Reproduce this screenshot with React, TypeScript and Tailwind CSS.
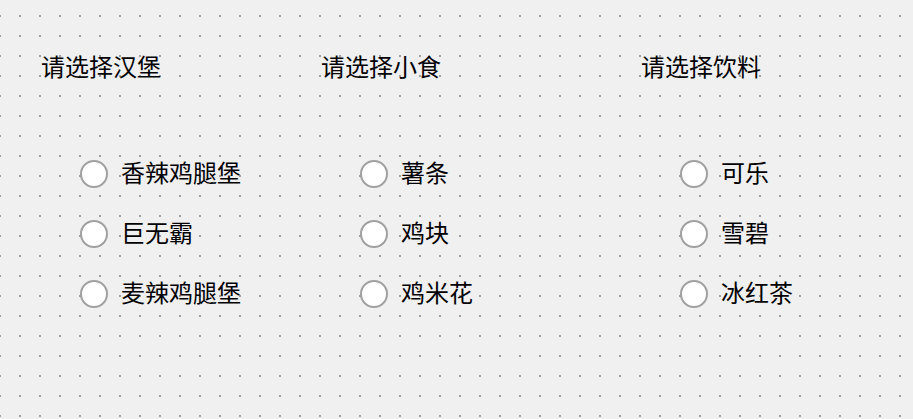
import { useState } from "react";

const groups = [
  { title: "请选择汉堡", items: ["香辣鸡腿堡", "巨无霸", "麦辣鸡腿堡"], width: "w-[280px]" },
  { title: "请选择小食", items: ["薯条", "鸡块", "鸡米花"], width: "w-[320px]" },
  { title: "请选择饮料", items: ["可乐", "雪碧", "冰红茶"], width: "w-[240px]" },
];

const RadioRow = ({
  label,
  checked,
  onSelect,
}: {
  label: string;
  checked: boolean;
  onSelect: () => void;
}) => {
  return (
    <label className="flex h-[60px] items-center gap-[13px] cursor-pointer" onClick={onSelect}>
      <span className="flex h-[28px] w-[28px] items-center justify-center rounded-full border-2 border-[#a0a0a0] bg-white">
        {checked && <span className="h-[12px] w-[12px] rounded-full bg-[#333]" />}
      </span>
      <span className="mb-[4px] text-[24px] leading-[32px] text-black">{label}</span>
    </label>
  );
};

const App = () => {
  const [picked, setPicked] = useState<Record<string, string>>({});

  return (
    <div
      className="flex h-[419px] w-[913px] bg-[#f0f0f0] bg-[radial-gradient(circle_at_1px_1px,#a0a0a0_1.5px,transparent_1.5px)] bg-[size:20px_20px] bg-[position:19px_15px] pl-[41px] pt-[50px] font-['Noto_Sans_CJK_SC',sans-serif] overflow-hidden"
    >
      {groups.map((g) => (
        <div key={g.title} className={`flex flex-col ${g.width}`}>
          <div className="h-[32px] text-[24px] leading-[32px] text-black">{g.title}</div>
          <div className="ml-[39px] mt-[62px] flex flex-col">
            {g.items.map((item) => (
              <RadioRow
                key={item}
                label={item}
                checked={picked[g.title] === item}
                onSelect={() => setPicked({ ...picked, [g.title]: item })}
              />
            ))}
          </div>
        </div>
      ))}
    </div>
  );
};

export default App;
